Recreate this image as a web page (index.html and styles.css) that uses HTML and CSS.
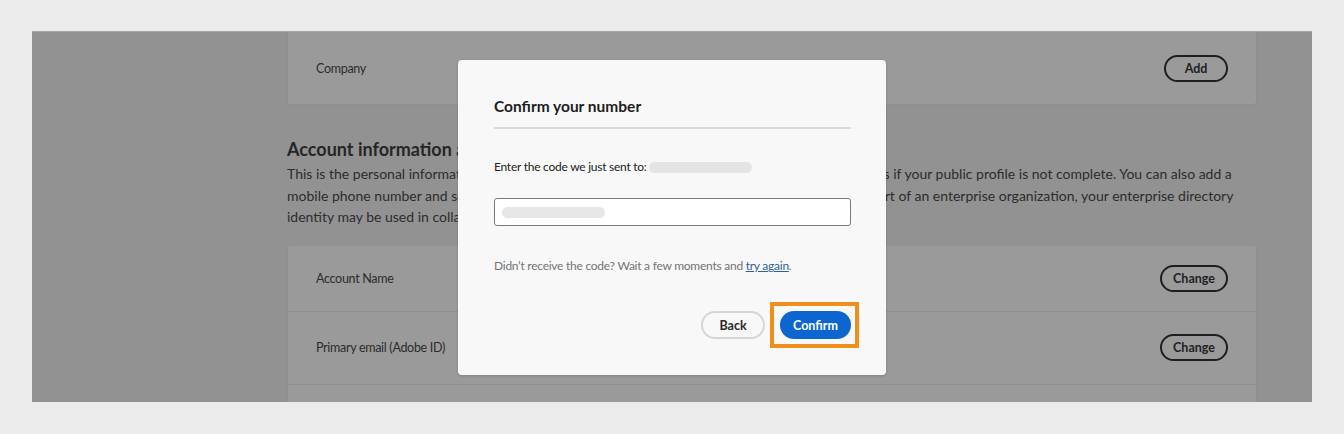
FILE: index.html
```html
<!DOCTYPE html>
<html lang="en">
<head>
<meta charset="utf-8">
<title>Confirm your number</title>
<link rel="stylesheet" href="styles.css">
</head>
<body>
<div class="frame">
  <div class="content">
    <div class="card card-top">
      <div class="row row-company">
        <span class="label">Company</span>
        <span class="pill-btn btn-add">Add</span>
      </div>
    </div>
    <h2 class="section-title">Account information and access</h2>
    <p class="section-text">This is the personal information used to identify you across Adobe and for collaboration invitations if your public profile is not complete. You can also add a mobile phone number and secondary email to help you securely access your account. If you are part of an enterprise organization, your enterprise directory identity may be used in collaboration.</p>
    <div class="card">
      <div class="row row-name">
        <span class="label">Account Name</span>
        <span class="pill-btn btn-change">Change</span>
      </div>
      <div class="row row-email">
        <span class="label">Primary email (Adobe ID)</span>
        <span class="pill-btn btn-change">Change</span>
      </div>
      <div class="row row-more"></div>
    </div>
  </div>

  <div class="modal">
    <h1 class="modal-title">Confirm your number</h1>
    <div class="divider"></div>
    <p class="modal-text">Enter the code we just sent to:<span class="mask mask-phone"></span></p>
    <div class="input"><span class="mask mask-code"></span></div>
    <p class="modal-hint">Didn’t receive the code? Wait a few moments and <a class="link" href="#">try again</a>.</p>
    <div class="actions">
      <span class="btn btn-back">Back</span>
      <span class="btn btn-confirm">Confirm</span>
    </div>
  </div>
</div>
</body>
</html>
```
FILE: styles.css
```css
html, body {
  margin: 0;
  padding: 0;
}
body {
  background: #ebebeb;
  font-family: Lato, "Liberation Sans", sans-serif;
  width: 1344px;
  height: 434px;
  overflow: hidden;
}
.frame {
  position: relative;
  margin: 31px 0 0 32px;
  width: 1280px;
  height: 371px;
  background: #929292;
  overflow: hidden;
  border-top: 1px solid #a4a4a4;
  box-sizing: border-box;
}
.content {
  margin-left: 255px;
  width: 970px;
  color: #2a2a2a;
}
.card {
  background: #9a9a9a;
  border: 1px solid #8f8f8f;
  border-radius: 3px;
}
.card-top {
  border-top: none;
  border-radius: 0 0 3px 3px;
}
.row {
  display: flex;
  align-items: center;
  justify-content: space-between;
  padding: 0 28px 0 28px;
  box-sizing: border-box;
}
.row + .row {
  border-top: 1px solid #8f8f8f;
}
.row-company { height: 72px; }
.row-name { height: 65px; }
.row-email { height: 73px; }
.row-more { height: 30px; }
.label {
  font-size: 12.5px;
  letter-spacing: -0.3px;
  color: #2c2c2c;
}
.pill-btn {
  display: inline-flex;
  align-items: center;
  justify-content: center;
  height: 27px;
  box-sizing: border-box;
  border: 2px solid #1e1e1e;
  border-radius: 14px;
  font-size: 12.5px;
  font-weight: 700;
  color: #222;
}
.btn-add { width: 64px; }
.btn-change { width: 68px; }
.section-title {
  margin: 33px 0 0 0;
  font-size: 18px;
  line-height: 22px;
  font-weight: 700;
  color: #262626;
}
.section-text {
  margin: 3px 0 17px 0;
  font-size: 14px;
  line-height: 21.5px;
  color: #2c2c2c;
}
.modal {
  position: absolute;
  left: 426px;
  top: 28px;
  width: 428px;
  box-sizing: border-box;
  padding: 36px 35px 36px 36px;
  background: #f8f8f8;
  border-radius: 4px;
  box-shadow: 0 1px 3px rgba(0,0,0,0.15);
}
.modal-title {
  margin: 0;
  font-size: 15.5px;
  line-height: 20px;
  font-weight: 700;
  color: #1d1d1d;
}
.divider {
  height: 2px;
  background: #dadada;
  margin-top: 11px;
}
.modal-text {
  display: flex;
  align-items: center;
  margin: 30px 0 0 0;
  font-size: 12px;
  letter-spacing: -0.25px;
  line-height: 16px;
  color: #222;
}
.mask {
  display: inline-block;
  background: #e4e4e4;
  border-radius: 6px;
  height: 11px;
}
.mask-phone {
  width: 103px;
  margin-left: 2px;
}
.input {
  margin-top: 23px;
  height: 28px;
  box-sizing: border-box;
  border: 1px solid #7a7a7a;
  border-radius: 3px;
  background: #fff;
  display: flex;
  align-items: center;
  padding-left: 7px;
}
.mask-code {
  width: 103px;
  background: #e6e6e6;
}
.modal-hint {
  margin: 32px 0 0 0;
  font-size: 12px;
  letter-spacing: -0.25px;
  line-height: 16px;
  color: #747474;
}
.link {
  color: #2d5f95;
  text-decoration: underline;
}
.actions {
  display: flex;
  justify-content: flex-end;
  gap: 15px;
  margin-top: 37px;
}
.btn {
  display: inline-flex;
  align-items: center;
  justify-content: center;
  height: 28px;
  box-sizing: border-box;
  border-radius: 14px;
  font-size: 12.5px;
  font-weight: 700;
}
.btn-back {
  width: 64px;
  border: 2px solid #d6d6d6;
  color: #2a2a2a;
  background: #f8f8f8;
}
.btn-confirm {
  position: relative;
  width: 71px;
  background: #0d66d0;
  color: #fff;
}
.btn-confirm::after {
  content: "";
  position: absolute;
  left: -10px;
  right: -8px;
  top: -9px;
  bottom: -9px;
  border: 4px solid #f0901c;
}
```
